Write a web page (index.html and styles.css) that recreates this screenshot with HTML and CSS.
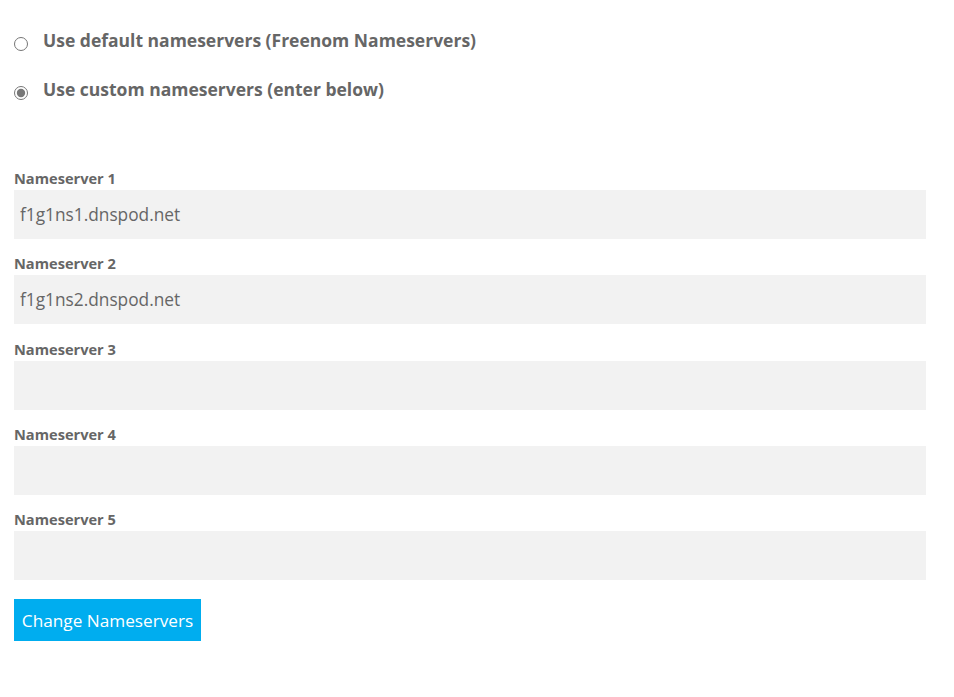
FILE: index.html
```html
<!DOCTYPE html>
<html>
<head>
<meta charset="utf-8">
<link rel="stylesheet" href="styles.css">
</head>
<body>
<form class="page">
  <div class="options">
    <label class="option">
      <input type="radio" name="ns" class="radio">
      <span class="option-text">Use default nameservers (Freenom Nameservers)</span>
    </label>
    <label class="option">
      <input type="radio" name="ns" class="radio" checked>
      <span class="option-text">Use custom nameservers (enter below)</span>
    </label>
  </div>
  <div class="fields">
    <div class="field">
      <label class="field-label">Nameserver 1</label>
      <input class="field-input" type="text" value="f1g1ns1.dnspod.net">
    </div>
    <div class="field">
      <label class="field-label">Nameserver 2</label>
      <input class="field-input" type="text" value="f1g1ns2.dnspod.net">
    </div>
    <div class="field">
      <label class="field-label">Nameserver 3</label>
      <input class="field-input" type="text" value="">
    </div>
    <div class="field">
      <label class="field-label">Nameserver 4</label>
      <input class="field-input" type="text" value="">
    </div>
    <div class="field">
      <label class="field-label">Nameserver 5</label>
      <input class="field-input" type="text" value="">
    </div>
  </div>
  <button type="button" class="submit">Change Nameservers</button>
</form>
</body>
</html>
```
FILE: styles.css
```css
html, body {
  margin: 0;
  padding: 0;
  background: #ffffff;
}
body {
  font-family: "Open Sans", "Liberation Sans", sans-serif;
  color: #666666;
}
.page {
  padding: 28px 0 0 14px;
  width: 912px;
}
.options {
  display: flex;
  flex-direction: column;
  gap: 25px;
}
.option {
  display: flex;
  align-items: center;
  height: 24px;
}
.radio {
  margin: 7px 15px 0 0;
  width: 14px;
  height: 14px;
  accent-color: #777;
}
.option-text {
  font-size: 17.5px;
  font-weight: 700;
  color: #666666;
}
.fields {
  margin-top: 68px;
  display: flex;
  flex-direction: column;
  gap: 15.25px;
}
.field {
  display: flex;
  flex-direction: column;
}
.field-label {
  font-size: 14.6px;
  font-weight: 700;
  line-height: 19px;
  margin-bottom: 2px;
  color: #666666;
}
.field-input {
  box-sizing: border-box;
  height: 49px;
  width: 912px;
  border: none;
  background: #f2f2f2;
  padding: 0 6px;
  font-family: "Open Sans", "Liberation Sans", sans-serif;
  font-size: 17.3px;
  color: #666666;
  outline: none;
}
.submit {
  margin-top: 19px;
  height: 42px;
  width: 187px;
  border: none;
  background: #00adef;
  color: #ffffff;
  font-family: "Open Sans", "Liberation Sans", sans-serif;
  font-size: 17.2px;
  padding: 0;
}
```
